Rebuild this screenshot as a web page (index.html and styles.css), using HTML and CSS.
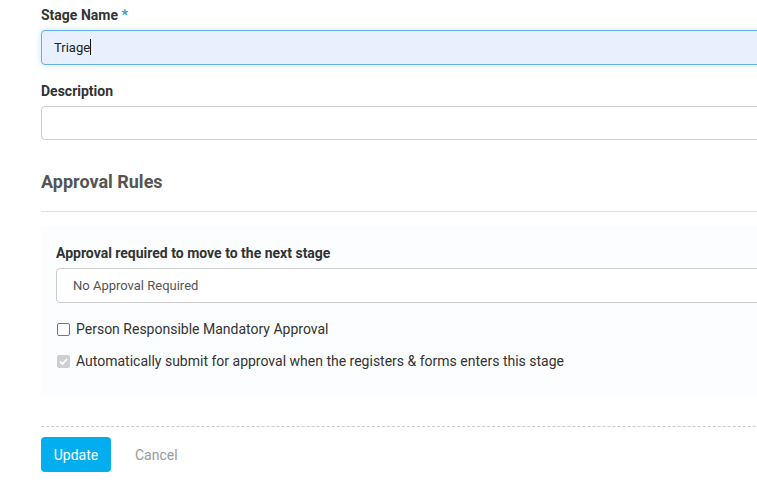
FILE: index.html
```html
<!DOCTYPE html>
<html>
<head>
<meta charset="utf-8">
<link rel="stylesheet" href="styles.css">
</head>
<body>
<div class="form">
  <div class="field">
    <label class="label">Stage Name <span class="req">*</span></label>
    <div class="input focused">Triage<span class="caret"></span></div>
  </div>
  <div class="field">
    <label class="label">Description</label>
    <div class="input"></div>
  </div>
  <h2 class="section-title">Approval Rules</h2>
  <div class="rule"></div>
  <div class="panel">
    <label class="label">Approval required to move to the next stage</label>
    <div class="select">No Approval Required</div>
    <div class="check-row">
      <span class="box"></span>
      <span class="check-text">Person Responsible Mandatory Approval</span>
    </div>
    <div class="check-row">
      <span class="box disabled"><svg width="11" height="11" viewBox="0 0 11 11"><path d="M2 5.6 L4.4 8 L9 3" fill="none" stroke="#fff" stroke-width="1.8"/></svg></span>
      <span class="check-text">Automatically submit for approval when the registers &amp; forms enters this stage</span>
    </div>
  </div>
  <div class="dashed"></div>
  <div class="actions">
    <button class="btn-primary">Update</button>
    <button class="btn-link">Cancel</button>
  </div>
</div>
</body>
</html>
```
FILE: styles.css
```css
html, body {
  margin: 0;
  padding: 0;
  background: #fff;
  overflow: hidden;
}
body {
  font-family: Roboto, "Liberation Sans", Arial, sans-serif;
  color: #333;
}
.form {
  width: 780px;
  padding: 7px 0 0 41px;
}
.field {
  display: flex;
  flex-direction: column;
  margin-bottom: 18px;
}
.label {
  display: block;
  font-size: 14px;
  font-weight: 700;
  line-height: 17px;
  color: #333;
  margin-bottom: 6px;
}
.req {
  color: #2a9fd8;
}
.input {
  box-sizing: border-box;
  height: 34px;
  border: 1px solid #ccc;
  border-radius: 4px;
  font-size: 13px;
  line-height: 32px;
  padding-left: 12px;
  color: #222;
  background: #fff;
}
.input.focused {
  height: 35px;
  background: #e8f0fe;
  border-color: #66afe9;
  box-shadow: 0 0 6px rgba(102, 175, 233, 0.35);
  line-height: 33px;
}
.caret {
  display: inline-block;
  width: 1px;
  height: 16px;
  background: #111;
  vertical-align: -3px;
}
.section-title {
  margin: 31px 0 0;
  font-size: 18px;
  font-weight: 700;
  line-height: 22px;
  color: #555;
}
.rule {
  height: 1px;
  background: #ddd;
  margin-top: 18px;
}
.panel {
  margin-top: 14px;
  background: #fcfdfe;
  padding: 19px 0 27px 15px;
}
.select {
  box-sizing: border-box;
  height: 35px;
  border: 1px solid #ccc;
  border-radius: 4px;
  font-size: 13px;
  line-height: 33px;
  padding-left: 16px;
  color: #555;
  background: #fff;
  margin-top: 3px;
}
.check-row {
  display: flex;
  align-items: center;
  gap: 6px;
  height: 18px;
}
.check-row + .check-row {
  margin-top: 14px;
}
.select + .check-row {
  margin-top: 17px;
}
.box {
  box-sizing: border-box;
  width: 13px;
  height: 13px;
  border: 1px solid #767676;
  border-radius: 2px;
  background: #fff;
  display: flex;
  align-items: center;
  justify-content: center;
  margin-left: 1px;
}
.box.disabled {
  border: none;
  background: #cfcfcf;
}
.check-text {
  font-size: 14px;
  color: #333;
}
.dashed {
  margin-top: 29px;
  border-top: 1px dashed #ccc;
}
.actions {
  display: flex;
  align-items: center;
  gap: 12px;
  margin-top: 10px;
}
.btn-primary {
  font-family: inherit;
  font-size: 14px;
  width: 70px;
  height: 35px;
  border: none;
  border-radius: 4px;
  background: #03aeef;
  color: #fff;
}
.btn-link {
  font-family: inherit;
  font-size: 14px;
  border: none;
  background: none;
  color: #999;
  padding: 0 12px;
}
```
